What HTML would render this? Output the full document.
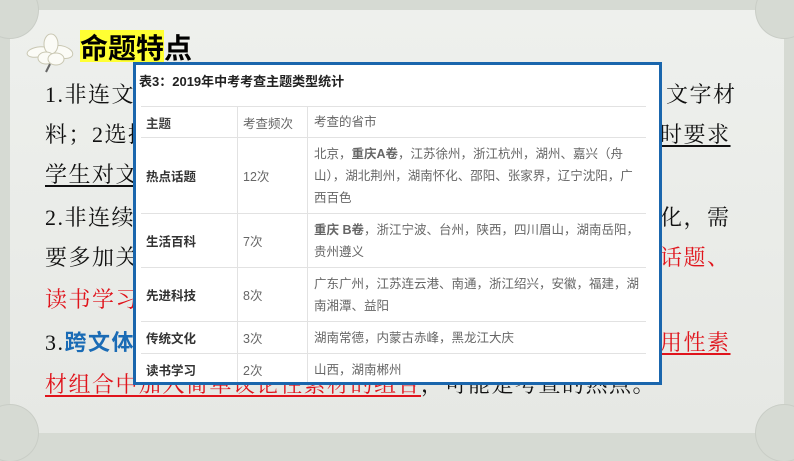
<!DOCTYPE html>
<html><head><meta charset="utf-8"><style>
*{margin:0;padding:0;box-sizing:border-box}
body{width:794px;height:447px;background:#d6dad3;position:relative;overflow:hidden;font-family:"Liberation Serif","Noto Serif CJK SC",serif}
.panel{position:absolute;left:10px;top:10px;width:774px;height:423px;background:linear-gradient(180deg,#eef0ed,#e6e8e4);}
.c{position:absolute;width:56px;height:56px;border-radius:50%;background:#d6dad3;box-shadow:0 0 0 1px #c9cdc6}
.t{position:absolute;font-size:22px;letter-spacing:1.5px;color:#111;white-space:nowrap;line-height:26px}
.r{color:#e0141c}
.u{text-decoration:underline;text-underline-offset:3px}
.tb{position:absolute;left:133px;top:62px;width:529px;height:323px;background:#fff;border:3px solid #1a66ad;font-family:"Liberation Sans","Noto Sans CJK SC",sans-serif;overflow:hidden}
.tb .ti{position:absolute;left:3px;top:6px;font-size:13px;font-weight:bold;color:#222}
.row{position:absolute;left:5px;width:505px;border-top:1px solid #e2e2e2;font-size:12.5px;color:#666}
.row>div{position:absolute;top:0;height:100%;display:flex;align-items:center}
.a{left:0;width:97px;padding-left:5px;border-right:1px solid #e2e2e2;font-weight:bold;color:#333}
.b{left:97px;width:70px;padding-left:5px;border-right:1px solid #e2e2e2}
.cc{left:167px;width:338px;padding-left:6px;padding-right:4px;line-height:22px}
.cc span{display:block}
</style></head><body>
<div class="panel"></div>
<div class="c" style="left:-18px;top:-18px"></div>
<div class="c" style="left:756px;top:-18px"></div>
<div class="c" style="left:-18px;top:405px"></div>
<div class="c" style="left:756px;top:405px"></div>
<svg style="position:absolute;left:26px;top:32px" width="50" height="42" viewBox="0 0 50 42">
<g fill="#fbfbf6" stroke="#c9c7b2" stroke-width="1">
<ellipse cx="12" cy="20" rx="11" ry="5" transform="rotate(-10 12 20)"/>
<ellipse cx="36" cy="20" rx="11" ry="6" transform="rotate(15 36 20)"/>
<ellipse cx="25" cy="12" rx="7" ry="10"/>
<ellipse cx="20" cy="26" rx="8" ry="6"/>
<ellipse cx="30" cy="27" rx="8" ry="6"/>
</g><path d="M24 32 L20 40" stroke="#666" stroke-width="2"/></svg>
<div style="position:absolute;left:80px;top:30px;width:84px;height:32px;background:#ffff33"></div>
<div style="position:absolute;left:80px;top:27px;font-size:28px;font-weight:bold;font-family:'Liberation Sans','Noto Sans CJK SC',sans-serif;color:#000">命题特点</div>

<div class="t" style="left:45px;top:82px">1.非连文本阅读材料由图表、数据、</div>
<div class="t" style="left:666px;top:82px">文字材</div>
<div class="t" style="left:45px;top:122px">料；2选择题</div>
<div class="t u" style="left:660px;top:122px">时要求</div>
<div class="t u" style="left:45px;top:162px">学生对文本</div>
<div class="t" style="left:45px;top:205px">2.非连续</div>
<div class="t" style="left:660px;top:205px">化，需</div>
<div class="t" style="left:45px;top:245px">要多加关注</div>
<div class="t r" style="left:660px;top:245px">话题、</div>
<div class="t r" style="left:45px;top:287px">读书学习</div>
<div class="t" style="left:45px;top:330px">3.<b style="color:#1a6bb5;font-family:'Liberation Sans','Noto Sans CJK SC',sans-serif">跨文体</b></div>
<div class="t r u" style="left:660px;top:330px">用性素</div>
<div class="t" style="left:45px;top:372px"><span class="r u">材组合中加入简单议论性素材的组合</span>，可能是考查的热点。</div>

<div class="tb">
<div class="ti">表3：2019年中考考查主题类型统计</div>
<div class="row" style="top:41px;height:31px"><div class="a" style="font-weight:bold;color:#444">主题</div><div class="b">考查频次</div><div class="cc"><span>考查的省市</span></div></div>
<div class="row" style="top:72px;height:76px"><div class="a">热点话题</div><div class="b">12次</div><div class="cc"><span>北京，<b>重庆A卷</b>，江苏徐州，浙江杭州，湖州、嘉兴（舟山），湖北荆州，湖南怀化、邵阳、张家界，辽宁沈阳，广西百色</span></div></div>
<div class="row" style="top:148px;height:54px"><div class="a">生活百科</div><div class="b">7次</div><div class="cc"><span><b>重庆 B卷</b>，浙江宁波、台州，陕西，四川眉山，湖南岳阳，贵州遵义</span></div></div>
<div class="row" style="top:202px;height:54px"><div class="a">先进科技</div><div class="b">8次</div><div class="cc"><span>广东广州，江苏连云港、南通，浙江绍兴，安徽，福建，湖南湘潭、益阳</span></div></div>
<div class="row" style="top:256px;height:32px"><div class="a">传统文化</div><div class="b">3次</div><div class="cc"><span>湖南常德，内蒙古赤峰，黑龙江大庆</span></div></div>
<div class="row" style="top:288px;height:32px"><div class="a">读书学习</div><div class="b">2次</div><div class="cc"><span>山西，湖南郴州</span></div></div>
</div>
</body></html>
